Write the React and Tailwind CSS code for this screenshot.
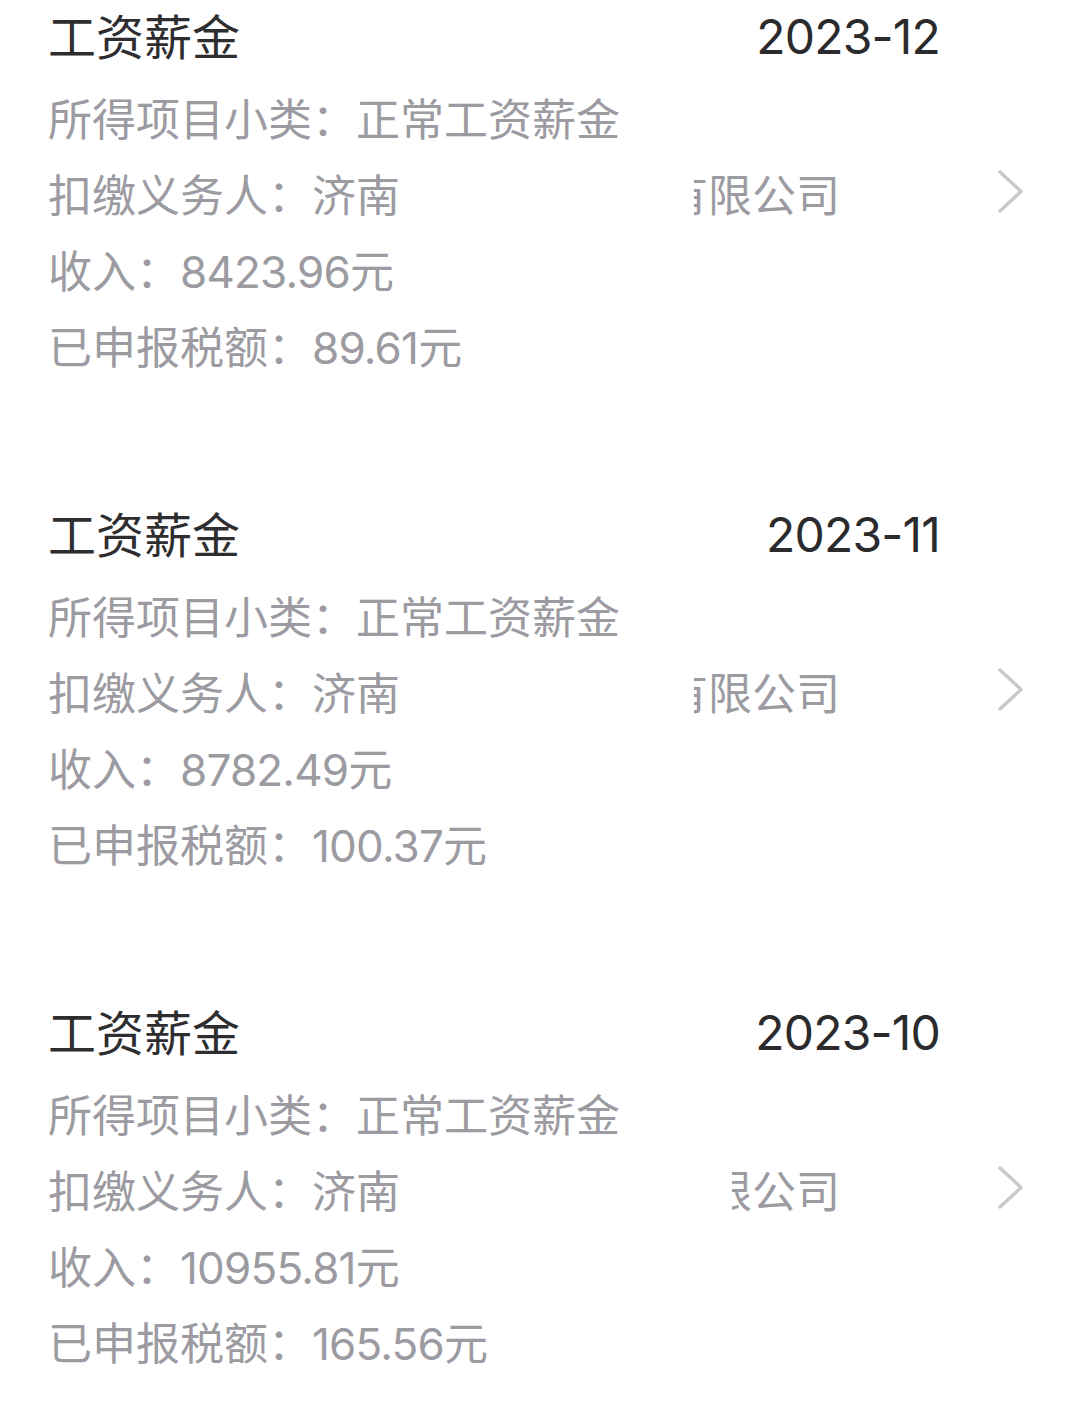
const RECORDS = [
  { month: '2023-12', income: '8423.96', tax: '89.61', cover: 'w-[30px]' },
  { month: '2023-11', income: '8782.49', tax: '100.37', cover: 'w-[30px]' },
  { month: '2023-10', income: '10955.81', tax: '165.56', cover: 'w-[68px]' },
]

function Chevron() {
  return (
    <svg width="27" height="45" viewBox="0 0 27 45" fill="none" className="flex-shrink-0">
      <polyline
        points="3,3 24,22.5 3,42"
        stroke="#c9c9cc"
        strokeWidth="3.5"
        strokeLinecap="round"
        strokeLinejoin="round"
      />
    </svg>
  )
}

function Num({ children }) {
  return <span className="font-['Inter','Noto_Sans',sans-serif] tracking-[-0.8px]">{children}</span>
}

function Record({ rec }) {
  return (
    <div className="pl-[48px] mb-[115px]">
      <div className="flex items-center justify-between pr-[140px] h-[68px]">
        <span className="text-[48px] leading-[68px] text-[#2e2e30]">工资薪金</span>
        <span className="mt-[6px] text-[48px] leading-[68px] text-[#2b2b2d] font-['Inter','Noto_Sans',sans-serif] tracking-[-0.8px]">
          {rec.month}
        </span>
      </div>

      <div className="mt-[11px] text-[44px] leading-[76px] text-[#9b9ba1]">
        <p className="h-[76px]">所得项目小类：正常工资薪金</p>
        <div className="flex items-center h-[76px] pr-[56px]">
          <span>扣缴义务人：济南</span>
          <span className="relative ml-[264px]">
            有限公司
            <span className={`absolute left-0 top-0 bottom-0 bg-white ${rec.cover}`} />
          </span>
          <span className="ml-auto -mt-[4px]">
            <Chevron />
          </span>
        </div>
        <p className="h-[76px]">收入：<Num>{rec.income}</Num>元</p>
        <p className="h-[76px]">已申报税额：<Num>{rec.tax}</Num>元</p>
      </div>
    </div>
  )
}

export default function App() {
  return (
    <div className="w-[1080px] min-h-[1423px] bg-white font-['Noto_Sans_CJK_SC','Noto_Sans',sans-serif]">
      {RECORDS.map(rec => (
        <Record key={rec.month} rec={rec} />
      ))}
    </div>
  )
}
